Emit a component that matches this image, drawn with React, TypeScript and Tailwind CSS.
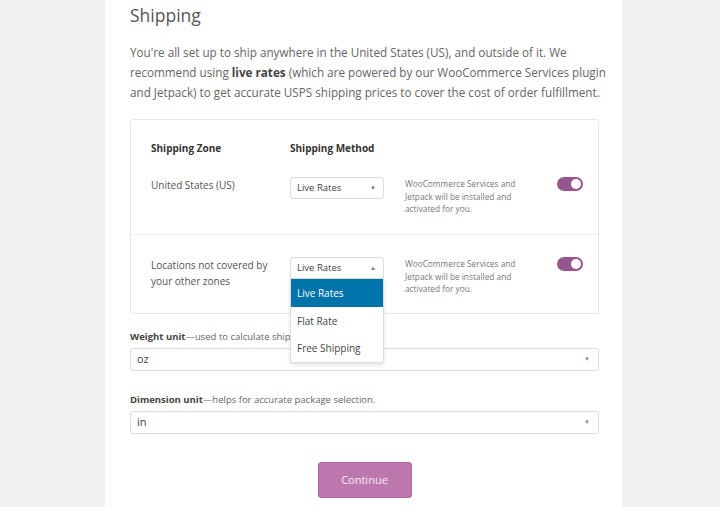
import React from "react";

const font = { fontFamily: '"Open Sans", "Noto Sans", sans-serif' };

function Toggle() {
  return (
    <div className="relative h-[14px] w-[26px] shrink-0 rounded-full bg-[#96588a]">
      <div className="absolute right-[2px] top-[2px] h-[10px] w-[10px] rounded-full bg-white" />
    </div>
  );
}

function SmallSelect({ open }: { open?: boolean }) {
  return (
    <div className="relative w-[94px] shrink-0">
      <div
        className={`flex h-[22px] items-center justify-between border border-[#dcdcdc] bg-white pl-[6px] pr-[7px] text-[9.5px] text-[#444] ${
          open ? "rounded-t-[3px]" : "rounded-[3px]"
        }`}
      >
        <span>Live Rates</span>
        <span className="text-[6px] text-[#777]">{open ? "▲" : "▼"}</span>
      </div>
      {open && (
        <div className="absolute left-0 top-[22px] z-10 w-[94px] border border-t-0 border-[#dcdcdc] bg-white text-[10px] shadow-[0_2px_4px_rgba(0,0,0,0.12)]">
          <div className="flex h-[28px] items-center bg-[#0073aa] pl-[6px] text-white">Live Rates</div>
          <div className="flex h-[28px] items-center pl-[6px] text-[#444]">Flat Rate</div>
          <div className="flex h-[27px] items-center pl-[6px] text-[#444]">Free Shipping</div>
        </div>
      )}
    </div>
  );
}

function Desc() {
  return (
    <div className="w-[120px] whitespace-nowrap pt-[1px] text-[8.3px] leading-[12.5px] text-[#777]">
      WooCommerce Services and
      <br />
      Jetpack will be installed and
      <br />
      activated for you.
    </div>
  );
}

function BigSelect({ value }: { value: string }) {
  return (
    <div className="flex h-[23px] items-center justify-between rounded-[3px] border border-[#dcdcdc] bg-white pl-[6px] pr-[8px] text-[11px] text-[#444]">
      <span>{value}</span>
      <span className="text-[6px] text-[#888]">▼</span>
    </div>
  );
}

export default function App() {
  return (
    <div className="min-h-[507px] w-full bg-[#f1f1f1]" style={font}>
      <div className="ml-[105px] h-[507px] w-[517px] bg-white pl-[25px] pr-[23px] pt-[2px]">
        <h1 className="text-[17.5px] leading-[26px] text-[#555]">Shipping</h1>
        <p className="mt-[14px] text-[11.7px] leading-[20px] text-[#666]">
          <span className="block whitespace-nowrap">You're all set up to ship anywhere in the United States (US), and outside of it. We</span>
          <span className="block whitespace-nowrap">
            recommend using <b className="font-bold text-[#444]">live rates</b> (which are powered by our WooCommerce Services plugin
          </span>
          <span className="block whitespace-nowrap">and Jetpack) to get accurate USPS shipping prices to cover the cost of order fulfillment.</span>
        </p>

        <div className="mt-[17px] h-[195px] rounded-[3px] border border-[#e8e8e8]">
          <div className="flex h-[35px] pl-[20px] pr-[15px] pt-[21px] text-[10px] font-bold leading-[14px] text-[#333]">
            <div className="w-[139px]">Shipping Zone</div>
            <div>Shipping Method</div>
          </div>
          <div className="flex h-[80px] items-start border-b border-[#eee] pl-[20px] pr-[15px] pt-[22px]">
            <div className="w-[139px] pt-[1px] text-[10px] leading-[14px] text-[#555]">United States (US)</div>
            <SmallSelect />
            <div className="ml-[21px]">
              <Desc />
            </div>
            <div className="ml-auto">
              <Toggle />
            </div>
          </div>
          <div className="flex items-start pl-[20px] pr-[15px] pt-[22px]">
            <div className="w-[139px] text-[10px] leading-[16px] text-[#555]">
              Locations not covered by
              <br />
              your other zones
            </div>
            <SmallSelect open />
            <div className="ml-[21px]">
              <Desc />
            </div>
            <div className="ml-auto">
              <Toggle />
            </div>
          </div>
        </div>

        <div className="mt-[16px] text-[9.5px] leading-[14px] text-[#666]">
          <b className="font-bold text-[#444]">Weight unit</b>—used to calculate shipping rates.
        </div>
        <div className="mt-[4px]">
          <BigSelect value="oz" />
        </div>
        <div className="mt-[22px] text-[9.5px] leading-[14px] text-[#666]">
          <b className="font-bold text-[#444]">Dimension unit</b>—helps for accurate package selection.
        </div>
        <div className="mt-[4px]">
          <BigSelect value="in" />
        </div>
        <div className="mt-[28px] flex justify-center">
          <button className="h-[36px] w-[94px] rounded-[3px] border border-[#b06aa2] bg-[#bb77ae] text-[11px] text-[#fbeef8]">
            Continue
          </button>
        </div>
      </div>
    </div>
  );
}
